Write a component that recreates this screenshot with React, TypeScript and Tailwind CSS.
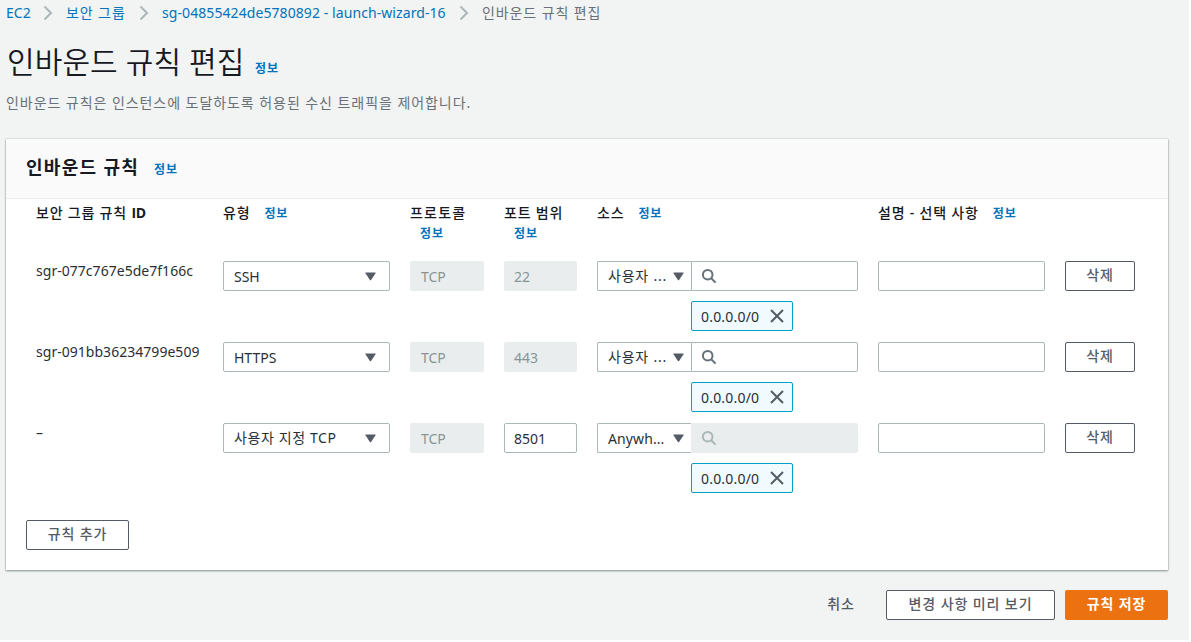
import clsx from "clsx";

const crumbs = [
  { label: "EC2", width: "w-[25px]" },
  { label: "보안 그룹", width: "w-[61px] tracking-[0.9px]" },
  { label: "sg-04855424de5780892 - launch-wizard-16", width: "w-[285px] tracking-[0.08px]" },
];

const rules = [
  { id: "sgr-077c767e5de7f166c", type: "SSH", port: "22", source: "사용자 ...", custom: false },
  { id: "sgr-091bb36234799e509", type: "HTTPS", port: "443", source: "사용자 ...", custom: false },
  { id: "–", type: "사용자 지정 TCP", port: "8501", source: "Anywh...", custom: true },
];

const columns = "grid grid-cols-[167px_167px_74px_73px_261px_167px_70px] gap-x-5";

function Info({ className }: { className?: string }) {
  return (
    <a href="#" className={clsx("text-[12px] font-bold tracking-[0.9px] text-[#0073bb]", className)}>
      정보
    </a>
  );
}

function Chevron() {
  return (
    <svg width="10" height="16" viewBox="0 0 10 16" fill="none" stroke="#aab7b8" strokeWidth="2">
      <path d="M1.5 1.5 8 8l-6.5 6.5" />
    </svg>
  );
}

function Caret() {
  return (
    <svg width="11" height="9" viewBox="0 0 11 9" className="shrink-0" fill="#545b64">
      <path d="M.8.5h9.4q.7 0 .3.7L6.1 7.9q-.6.8-1.2 0L.5 1.2Q.1.5.8.5Z" />
    </svg>
  );
}

function Search({ disabled }: { disabled: boolean }) {
  return (
    <svg width="16" height="16" viewBox="0 0 16 16" fill="none" stroke={disabled ? "#aab7b8" : "#687078"} strokeWidth="2">
      <circle cx="6.7" cy="6.7" r="4.8" />
      <path d="m10.2 10.2 4.4 4.4" />
    </svg>
  );
}

function Close() {
  return (
    <svg width="14" height="14" viewBox="0 0 14 14" fill="none" stroke="#545b64" strokeWidth="2">
      <path d="m1 1 12 12M13 1 1 13" />
    </svg>
  );
}

function Button({ children, className }: { children: string; className?: string }) {
  return (
    <button
      className={clsx(
        "flex h-[30px] items-center justify-center rounded-[2px] border border-[#545b64] bg-white pb-[3px] text-[14px] font-medium tracking-[0.9px] whitespace-nowrap text-[#545b64]",
        className,
      )}
    >
      {children}
    </button>
  );
}

export default function App() {
  return (
    <div className="h-[642px] w-[1191px] overflow-hidden bg-white font-['Noto_Sans','Noto_Sans_CJK_KR',sans-serif] text-[14px] text-[#16191f]">
      <main className="h-[640px] w-[1189px] bg-[#f2f3f3] pl-[6px]">
        <nav className="flex h-[26px] items-center whitespace-nowrap text-[#0073bb]">
          {crumbs.map((crumb) => (
            <div key={crumb.label} className="flex items-center">
              <a href="#" className={clsx("pb-px", crumb.width)}>{crumb.label}</a>
              <span className="mr-[13px] ml-[12px]">
                <Chevron />
              </span>
            </div>
          ))}
          <span className="pb-px tracking-[0.9px] text-[#687078]">인바운드 규칙 편집</span>
        </nav>

        <div className="mt-[14px] flex h-[44px] items-center whitespace-nowrap">
          <h1 className="w-[249px] pb-px pl-px text-[30px] font-[350] tracking-[0.1px]">인바운드 규칙 편집</h1>
          <Info className="mt-[14px]" />
        </div>
        <p className="mt-[9px] h-[20px] leading-[20px] tracking-[0.94px] whitespace-nowrap text-[#687078]">
          인바운드 규칙은 인스턴스에 도달하도록 허용된 수신 트래픽을 제어합니다.
        </p>

        <section className="mt-[26px] h-[431px] w-[1162px] bg-white shadow-[0_1px_2px_#879596,0_0_1px_#879596]">
          <header className="flex h-[60px] items-center border-b border-[#eaeded] bg-[#fafafa] px-5 whitespace-nowrap">
            <h2 className="w-[128px] pb-[2px] text-[18px] font-bold tracking-[1.3px]">인바운드 규칙</h2>
            <Info className="pt-[2px]" />
          </header>

          <div className="px-[30px]">
            <div className={clsx(columns, "h-[62px] pt-[4px] leading-[20px] font-medium tracking-[0.8px] whitespace-nowrap")}>
              <div>
                보안 그룹 규칙 <span className="font-['Open_Sans',sans-serif] font-bold tracking-[-0.3px]">ID</span>
              </div>
              <div>유형<Info className="ml-[14px]" /></div>
              <div>
                <span className="tracking-[1.2px]">프로토콜</span>
                <div className="pl-[10px]"><Info /></div>
              </div>
              <div>
                포트 범위
                <div className="pl-[10px]"><Info /></div>
              </div>
              <div>소스<Info className="ml-[14px]" /></div>
              <div>설명 - 선택 사항<Info className="ml-[14px]" /></div>
            </div>

            {rules.map((rule) => (
              <div key={rule.id} className={clsx(columns, "h-[81px] items-start text-[#2a2f36]")}>
                <div className="leading-[20px] tracking-[0.03px] whitespace-nowrap">{rule.id}</div>
                <div className="flex h-[30px] items-center justify-between rounded-[2px] border border-[#aab7b8] pr-[13px] pl-[10px]">
                  <span className={rule.custom ? "pb-px tracking-[0.6px]" : undefined}>{rule.type}</span>
                  <Caret />
                </div>
                <div className="flex h-[30px] items-center rounded-[2px] bg-[#eaeded] pl-[11px] text-[#879596]">TCP</div>
                <div
                  className={clsx(
                    "flex h-[30px] items-center rounded-[2px] border pl-[9px]",
                    rule.custom ? "border-[#aab7b8]" : "border-[#eaeded] bg-[#eaeded] text-[#879596]",
                  )}
                >
                  {rule.port}
                </div>
                <div>
                  <div className="flex h-[30px]">
                    <div className="flex w-[94px] items-center justify-between rounded-l-[2px] border border-r-0 border-[#aab7b8] pr-[7px] pl-[10px] whitespace-nowrap">
                      <span className={rule.custom ? "tracking-[0.1px]" : "pb-px tracking-[0.8px]"}>{rule.source}</span>
                      <Caret />
                    </div>
                    <div
                      className={clsx(
                        "flex grow items-center rounded-r-[2px] border pl-[9px]",
                        rule.custom ? "border-[#eaeded] bg-[#eaeded]" : "border-[#aab7b8]",
                      )}
                    >
                      <Search disabled={rule.custom} />
                    </div>
                  </div>
                  <div className="mt-[10px] ml-[94px] flex h-[30px] w-[102px] items-center justify-between rounded-[2px] border border-[#00a1c9] bg-[#f1faff] pr-[8px] pl-[9px]">
                    <span className="tracking-[0.2px]">0.0.0.0/0</span>
                    <Close />
                  </div>
                </div>
                <div className="h-[30px] rounded-[2px] border border-[#aab7b8]" />
                <Button>삭제</Button>
              </div>
            ))}
          </div>

          <div className="px-5 pt-[16px]">
            <Button className="w-[103px]">규칙 추가</Button>
          </div>
        </section>

        <footer className="mt-[20px] flex w-[1162px] items-center justify-end">
          <button className="mr-[31px] pb-[3px] font-medium tracking-[1px] text-[#545b64]">취소</button>
          <Button className="mr-[10px] w-[169px]">변경 사항 미리 보기</Button>
          <button className="h-[30px] w-[103px] rounded-[2px] bg-[#ec7211] pb-[3px] font-bold tracking-[0.9px] text-white">
            규칙 저장
          </button>
        </footer>
      </main>
    </div>
  );
}
